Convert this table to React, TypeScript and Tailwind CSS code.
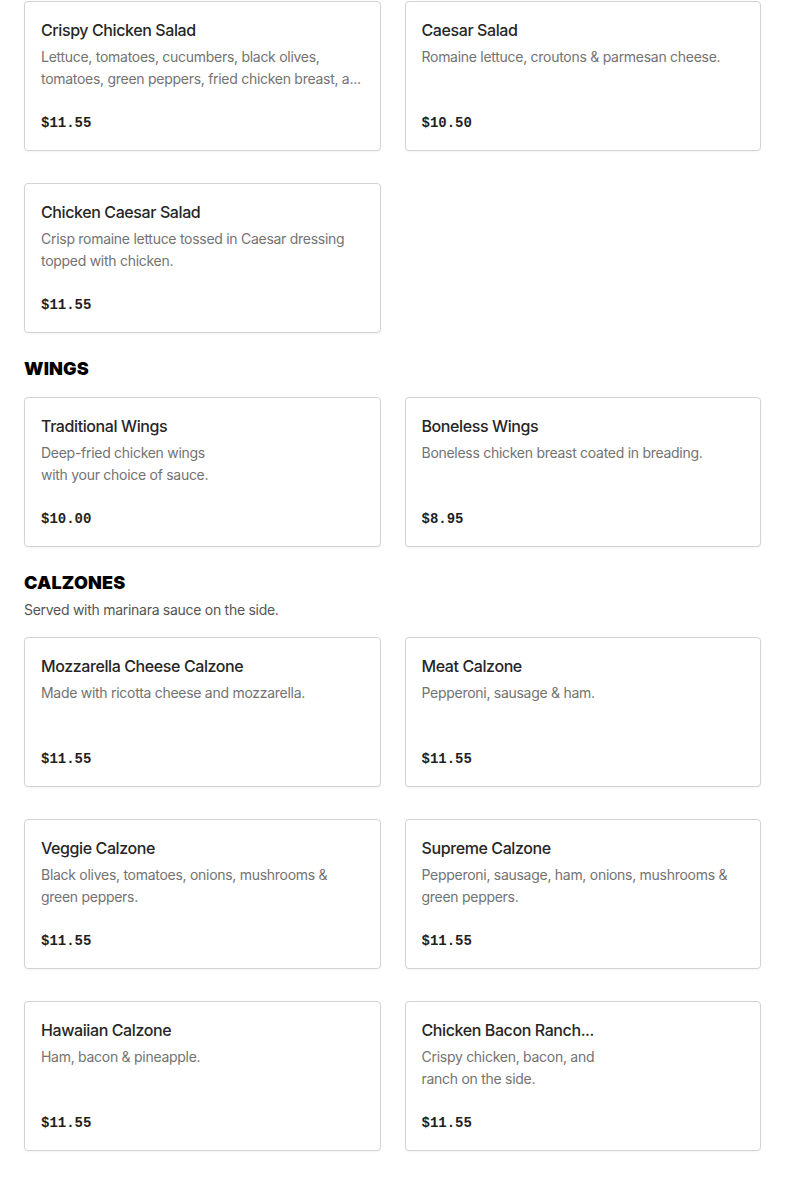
import React from 'react';

interface MenuItem {
    name: string;
    lines: string[]; // строки описания, как на макете
    price: string;
}

interface Section {
    title?: string;
    note?: string;
    items: MenuItem[];
}

const sections: Section[] = [
    {
        items: [
            {
                name: 'Crispy Chicken Salad',
                lines: ['Lettuce, tomatoes, cucumbers, black olives,', 'tomatoes, green peppers, fried chicken breast, a...'],
                price: '$11.55',
            },
            { name: 'Caesar Salad', lines: ['Romaine lettuce, croutons & parmesan cheese.'], price: '$10.50' },
            {
                name: 'Chicken Caesar Salad',
                lines: ['Crisp romaine lettuce tossed in Caesar dressing', 'topped with chicken.'],
                price: '$11.55',
            },
        ],
    },
    {
        title: 'Wings',
        items: [
            {
                name: 'Traditional Wings',
                lines: ['Deep-fried chicken wings', 'with your choice of sauce.'],
                price: '$10.00',
            },
            { name: 'Boneless Wings', lines: ['Boneless chicken breast coated in breading.'], price: '$8.95' },
        ],
    },
    {
        title: 'Calzones',
        note: 'Served with marinara sauce on the side.',
        items: [
            { name: 'Mozzarella Cheese Calzone', lines: ['Made with ricotta cheese and mozzarella.'], price: '$11.55' },
            { name: 'Meat Calzone', lines: ['Pepperoni, sausage & ham.'], price: '$11.55' },
            {
                name: 'Veggie Calzone',
                lines: ['Black olives, tomatoes, onions, mushrooms &', 'green peppers.'],
                price: '$11.55',
            },
            {
                name: 'Supreme Calzone',
                lines: ['Pepperoni, sausage, ham, onions, mushrooms &', 'green peppers.'],
                price: '$11.55',
            },
            { name: 'Hawaiian Calzone', lines: ['Ham, bacon & pineapple.'], price: '$11.55' },
            {
                name: 'Chicken Bacon Ranch...',
                lines: ['Crispy chicken, bacon, and', 'ranch on the side.'],
                price: '$11.55',
            },
        ],
    },
];

const MenuCard: React.FC<{ item: MenuItem }> = ({ item }) => (
    <div className="flex h-[150px] flex-col rounded border border-[#d3d3d3] bg-white px-4 pt-4 pb-[15px] shadow-[0_1px_2px_rgba(0,0,0,0.05)]">
        <h3 className="text-[16px] leading-6 font-medium tracking-[-0.025em] text-[#262626]">{item.name}</h3>
        <p className="mt-1 text-[14px] leading-[22px] tracking-[-0.02em] text-[#737373]">
            {item.lines.map((line, i) => (
                <span key={i} className="block whitespace-nowrap">
                    {line}
                </span>
            ))}
        </p>
        <div className="mt-auto font-['Liberation_Mono',monospace] text-[14px] leading-6 font-bold text-[#1f1f1f]">
            {item.price}
        </div>
    </div>
);

const App: React.FC = () => {
    return (
        <div className="min-h-screen bg-white px-6 pt-px pb-8 font-['Inter',sans-serif]">
            {sections.map((section, idx) => (
                <section key={idx} className={idx > 0 ? 'mt-6' : ''}>
                    {section.title && (
                        <div className="mb-4">
                            <h2 className="text-[18px] leading-6 font-black tracking-[0.01em] text-black uppercase">
                                {section.title}
                            </h2>
                            {section.note && (
                                <p className="mt-1 text-[14px] leading-[22px] tracking-[-0.02em] text-[#555555]">
                                    {section.note}
                                </p>
                            )}
                        </div>
                    )}
                    <div className="grid grid-cols-2 gap-x-6 gap-y-8">
                        {section.items.map((item) => (
                            <MenuCard key={item.name} item={item} />
                        ))}
                    </div>
                </section>
            ))}
        </div>
    );
};

export default App;
